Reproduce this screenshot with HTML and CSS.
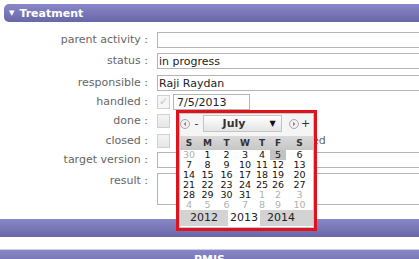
FILE: index.html
```html
<!DOCTYPE html>
<html lang="en">

<head>
  <meta charset="UTF-8">
  <meta name="viewport" content="width=device-width, initial-scale=1">
  <title>Treatment</title>
  <link rel="stylesheet" href="styles.css">
</head>

<body>
  <div class="panel">
    <div class="panel-head"><span class="caret">&#9660;</span>Treatment</div>

    <div class="fields">
      <label class="field-label">parent activity :</label>
      <input class="text-field" type="text" value="" readonly>

      <label class="field-label">status :</label>
      <input class="text-field" type="text" value="in progress" readonly>

      <label class="field-label">responsible :</label>
      <input class="text-field" type="text" value="Raji Raydan" readonly>

      <label class="field-label">handled :</label>
      <div class="field-line">
        <span class="check checked">&#10003;</span>
        <input class="date-field" type="text" value="7/5/2013" readonly>
      </div>

      <label class="field-label">done :</label>
      <div class="field-line">
        <span class="check"></span>
      </div>

      <label class="field-label">closed :</label>
      <div class="field-line">
        <span class="check"></span>
        <span class="side-note">when handled</span>
      </div>

      <label class="field-label">target version :</label>
      <input class="text-field" type="text" value="" readonly>

      <label class="field-label">result :</label>
      <textarea class="text-area" readonly></textarea>
    </div>

    <div class="panel-foot"></div>
  </div>

  <div class="next-panel">
    <div class="next-head">PMIS</div>
  </div>

  <!-- date picker popup over the form -->
  <div class="calendar">
    <div class="cal-inner">
      <div class="cal-nav">
        <svg class="cal-arrow" width="10" height="10" viewBox="0 0 10 10">
          <circle cx="5" cy="5" r="4.5" fill="#f2f2f2" stroke="#a8a8a8" />
          <path d="M6 2.8 L3.6 5 L6 7.2 Z" fill="#8a8a8a" />
        </svg>
        <span class="cal-step">-</span>
        <div class="cal-month">
          <span class="cal-month-name">July</span>
          <span class="cal-drop">&#9660;</span>
        </div>
        <svg class="cal-arrow" width="10" height="10" viewBox="0 0 10 10">
          <circle cx="5" cy="5" r="4.5" fill="#f2f2f2" stroke="#a8a8a8" />
          <path d="M4 2.8 L6.4 5 L4 7.2 Z" fill="#8a8a8a" />
        </svg>
        <span class="cal-step">+</span>
      </div>

      <table class="cal-days">
        <colgroup>
          <col><col><col><col><col><col><col>
        </colgroup>
        <thead>
          <tr><th>S</th><th>M</th><th>T</th><th>W</th><th>T</th><th>F</th><th>S</th></tr>
        </thead>
        <tbody>
          <tr><td class="other">30</td><td>1</td><td>2</td><td>3</td><td>4</td><td class="today">5</td><td>6</td></tr>
          <tr><td>7</td><td>8</td><td>9</td><td>10</td><td>11</td><td>12</td><td>13</td></tr>
          <tr><td>14</td><td>15</td><td>16</td><td>17</td><td>18</td><td>19</td><td>20</td></tr>
          <tr><td>21</td><td>22</td><td>23</td><td>24</td><td>25</td><td>26</td><td>27</td></tr>
          <tr><td>28</td><td>29</td><td>30</td><td>31</td><td class="other">1</td><td class="other">2</td><td class="other">3</td></tr>
          <tr><td class="other">4</td><td class="other">5</td><td class="other">6</td><td class="other">7</td><td class="other">8</td><td class="other">9</td><td class="other">10</td></tr>
        </tbody>
      </table>

      <div class="cal-years">
        <span class="year prev">2012</span>
        <span class="year current">2013</span>
        <span class="year next">2014</span>
      </div>
    </div>
  </div>
</body>

</html>
```

FILE: styles.css
```css
:root {
  --bar-top: #8987c7;
  --bar-bottom: #6967a8;
  --label: #666;
  --field-border: #b4b4b4;
  --picker-red: #e0121b;
}

* {
  box-sizing: border-box;
}

body {
  margin: 0;
  padding-top: 4px;
  position: relative;
  width: 419px;
  height: 259px;
  overflow: hidden;
  background: #fff;
  font-family: 'DejaVu Sans', Verdana, sans-serif;
  font-size: 11px;
  color: #222;
}

.panel-head {
  margin-left: 4px;
  height: 18px;
  padding-left: 5px;
  display: flex;
  align-items: center;
  gap: 5px;
  border-radius: 5px 0 0 5px;
  background: linear-gradient(var(--bar-top), var(--bar-bottom));
  color: #fff;
  font-weight: bold;
  font-size: 11px;
}

.caret {
  font-size: 7px;
}

.fields {
  margin-top: 10px;
  display: grid;
  grid-template-columns: 148px 1fr;
  grid-template-rows: 21px 22px 19px 19px 20px 19px 21px 32px;
  column-gap: 9px;
  align-items: start;
}

.field-label {
  text-align: right;
  line-height: 16px;
  color: var(--label);
  white-space: nowrap;
}

.text-field,
.date-field,
.text-area {
  height: 16px;
  margin: 0;
  padding: 0 1px;
  border: 1px solid var(--field-border);
  border-radius: 0;
  background: #fff;
  font-family: 'DejaVu Sans', Verdana, sans-serif;
  font-size: 11px;
  line-height: 14px;
  color: #222;
  outline: none;
}

.text-field {
  width: 300px;
}

.text-area {
  width: 300px;
  height: 32px;
  resize: none;
}

.field-line {
  display: flex;
  align-items: flex-start;
  gap: 3px;
}

.date-field {
  width: 77px;
  padding-left: 3px;
}

.check {
  width: 13px;
  height: 14px;
  margin-top: 1px;
  border: 1px solid #d0d0d0;
  background: linear-gradient(#f4f4f4, #e6e6e6);
  color: #c4c4c4;
  font-size: 11px;
  line-height: 12px;
  text-align: center;
}

.check.checked {
  background: #f6f6f6;
}

.side-note {
  margin-left: 75px;
  line-height: 16px;
  color: var(--label);
}

.panel-foot {
  margin-top: 14px;
  height: 18px;
  background: linear-gradient(var(--bar-top), var(--bar-bottom));
}

.next-panel {
  margin-top: 12px;
  border-top: 1px solid #cfcee4;
}

.next-head {
  height: 18px;
  padding-top: 3px;
  background: linear-gradient(var(--bar-top), var(--bar-bottom));
  color: #fff;
  font-weight: bold;
  text-align: center;
}

/* date picker */

.calendar {
  position: absolute;
  left: 176px;
  top: 110px;
  border: 3px solid var(--picker-red);
  background: #fff;
}

.cal-inner {
  width: 135px;
  border: 1px solid #c6c6c6;
  background: #fff;
}

.cal-nav {
  height: 22px;
  padding-top: 1px;
  display: flex;
  align-items: flex-start;
  background: #f5f5f5;
}

.cal-arrow {
  margin-top: 4px;
  flex: none;
}

.cal-step {
  width: 13px;
  line-height: 17px;
  text-align: center;
  color: #333;
}

.cal-month {
  width: 79px;
  height: 17px;
  display: flex;
  border: 1px solid #c4c4c4;
  background: linear-gradient(#ffffff, #e4e4e4);
  margin-right: 7px;
}

.cal-month-name {
  flex: 1;
  line-height: 15px;
  text-align: center;
  font-weight: bold;
  color: #333;
}

.cal-drop {
  width: 17px;
  line-height: 15px;
  text-align: center;
  font-size: 8px;
  color: #111;
}

.cal-days {
  width: 133px;
  table-layout: fixed;
  border-collapse: collapse;
  border-spacing: 0;
}

.cal-days col {
  width: 19px;
}

.cal-days col:nth-child(1),
.cal-days col:nth-child(4) {
  width: 18px;
}

.cal-days col:nth-child(5),
.cal-days col:nth-child(6) {
  width: 16px;
}

.cal-days col:nth-child(7) {
  width: 27px;
}

.cal-days th,
.cal-days td {
  padding: 0;
  text-align: center;
}

.cal-days th {
  height: 14px;
  background: linear-gradient(#dadada, #c6c6c6);
  font-size: 9px;
  font-weight: bold;
  color: #333;
  line-height: 14px;
}

.cal-days td {
  height: 10px;
  font-size: 9.5px;
  line-height: 10px;
  color: #111;
}

.cal-days td.other {
  color: #b0b0b0;
}

.cal-days td.today {
  background: #c2c2c2;
}

.cal-years {
  display: flex;
  height: 16px;
  margin-bottom: 1px;
  background: #d3d3d3;
  font-size: 11px;
  line-height: 16px;
  color: #222;
}

.year {
  text-align: center;
}

.year.prev {
  width: 48px;
}

.year.current {
  width: 32px;
  background: #fff;
}

.year.next {
  flex: 1;
  padding-right: 11px;
}
```
